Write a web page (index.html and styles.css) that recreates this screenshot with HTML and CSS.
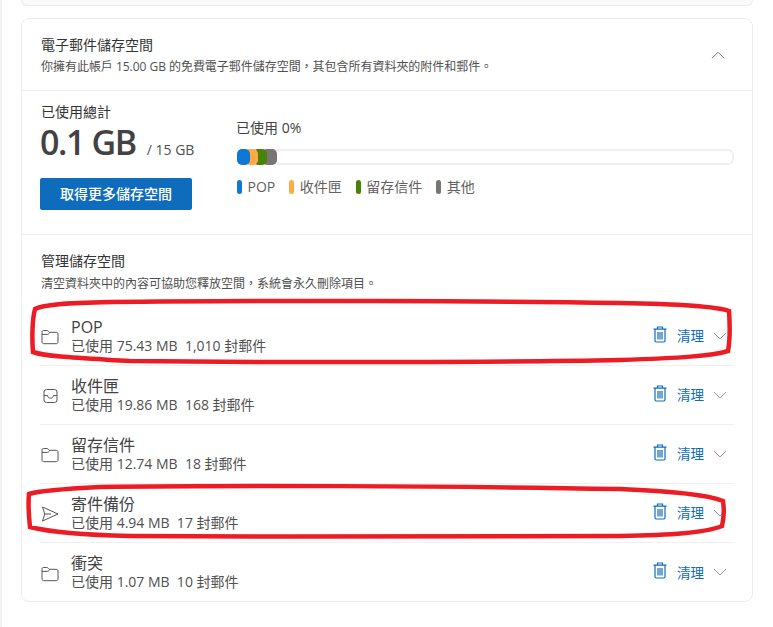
FILE: index.html
```html
<!DOCTYPE html>
<html lang="zh-Hant">
<head>
<meta charset="utf-8">
<title>電子郵件儲存空間</title>
<link rel="stylesheet" href="styles.css">
</head>
<body>
<main class="page">
  <div class="stub"></div>
  <section class="card">
    <header class="head">
      <div>
        <h2 class="head-title">電子郵件儲存空間</h2>
        <p class="head-sub">你擁有此帳戶 15.00 GB 的免費電子郵件儲存空間，其包含所有資料夾的附件和郵件。</p>
      </div>
      <svg class="head-chevron" width="14" height="8" viewBox="0 0 14 8"><path d="M1 7.2 7 1.2l6 6" fill="none" stroke="#777" stroke-width="1"/></svg>
    </header>
    <div class="usage">
      <div class="total">
        <div class="total-label">已使用總計</div>
        <div class="total-value"><span class="big">0.1 GB</span><span class="of">/ 15 GB</span></div>
        <button class="get-more">取得更多儲存空間</button>
      </div>
      <div class="meter">
        <div class="meter-label">已使用 0%</div>
        <div class="bar">
          <span class="seg seg-blue"></span><span class="seg seg-orange"></span><span class="seg seg-green"></span><span class="seg seg-gray"></span>
        </div>
        <ul class="legend">
          <li><i class="dot seg-blue"></i>POP</li>
          <li><i class="dot seg-orange"></i>收件匣</li>
          <li><i class="dot seg-green"></i>留存信件</li>
          <li><i class="dot seg-gray"></i>其他</li>
        </ul>
      </div>
    </div>
    <div class="manage">
      <h3 class="manage-title">管理儲存空間</h3>
      <p class="manage-sub">清空資料夾中的內容可協助您釋放空間，系統會永久刪除項目。</p>
      <ul class="rows">
        <li class="row">
          <svg class="row-icon" width="18" height="16" viewBox="0 0 18 16"><path d="M1 3.200C1 2 1.700 1.500 2.600 1.500h3.200c.7 0 1.100.3 1.600.8l1 1h6.900C16.300 3.300 17 4 17 5v8c0 1-.7 1.700-1.700 1.700H2.700C1.700 14.700 1 14 1 13zM1 5.400h5.300c.7 0 1.200-.3 1.600-.8l1.100-1.300" fill="none" stroke="#555" stroke-width="1"/></svg>
          <div class="row-text"><div class="row-name">POP</div><div class="row-meta">已使用 75.43 MB&nbsp;&nbsp;1,010 封郵件</div></div>
          <svg class="trash" width="14" height="17" viewBox="0 0 14 17"><path d="M4.500 3V1h5v2M.5 3.200h13M2 3.500v11.300c0 .7.500 1.200 1.200 1.200h7.600c.7 0 1.200-.5 1.200-1.200V3.500M5 6v7.500M7 6v7.500M9 6v7.500" fill="none" stroke="#0f6cbd" stroke-width="1.200"/></svg>
          <span class="clean">清理</span>
          <svg class="chev" width="14" height="8" viewBox="0 0 14 8"><path d="M1 1l6 6 6-6" fill="none" stroke="#999" stroke-width="1"/></svg>
        </li>
        <li class="row">
          <svg class="row-icon" width="18" height="16" viewBox="0 0 16 16"><rect x="2" y="1.500" width="13" height="13" rx="2.500" fill="none" stroke="#555" stroke-width="1"/><path d="M2 7.500h3.500c.5 2 1.500 2.700 3 2.700s2.500-.7 3-2.700H15" fill="none" stroke="#555" stroke-width="1"/></svg>
          <div class="row-text"><div class="row-name">收件匣</div><div class="row-meta">已使用 19.86 MB&nbsp;&nbsp;168 封郵件</div></div>
          <svg class="trash" width="14" height="17" viewBox="0 0 14 17"><path d="M4.500 3V1h5v2M.5 3.200h13M2 3.500v11.300c0 .7.500 1.200 1.200 1.200h7.600c.7 0 1.200-.5 1.200-1.200V3.500M5 6v7.500M7 6v7.500M9 6v7.500" fill="none" stroke="#0f6cbd" stroke-width="1.200"/></svg>
          <span class="clean">清理</span>
          <svg class="chev" width="14" height="8" viewBox="0 0 14 8"><path d="M1 1l6 6 6-6" fill="none" stroke="#999" stroke-width="1"/></svg>
        </li>
        <li class="row">
          <svg class="row-icon" width="18" height="16" viewBox="0 0 18 16"><path d="M1 3.200C1 2 1.700 1.500 2.600 1.500h3.200c.7 0 1.100.3 1.600.8l1 1h6.900C16.300 3.300 17 4 17 5v8c0 1-.7 1.700-1.700 1.700H2.700C1.700 14.700 1 14 1 13zM1 5.400h5.300c.7 0 1.200-.3 1.600-.8l1.100-1.300" fill="none" stroke="#555" stroke-width="1"/></svg>
          <div class="row-text"><div class="row-name">留存信件</div><div class="row-meta">已使用 12.74 MB&nbsp;&nbsp;18 封郵件</div></div>
          <svg class="trash" width="14" height="17" viewBox="0 0 14 17"><path d="M4.500 3V1h5v2M.5 3.200h13M2 3.500v11.300c0 .7.500 1.200 1.200 1.200h7.600c.7 0 1.200-.5 1.200-1.200V3.500M5 6v7.500M7 6v7.500M9 6v7.500" fill="none" stroke="#0f6cbd" stroke-width="1.200"/></svg>
          <span class="clean">清理</span>
          <svg class="chev" width="14" height="8" viewBox="0 0 14 8"><path d="M1 1l6 6 6-6" fill="none" stroke="#999" stroke-width="1"/></svg>
        </li>
        <li class="row">
          <svg class="row-icon" width="18" height="16" viewBox="0 0 18 16"><path d="M1.500 1 17 8 1.500 15 3.800 8zM3.800 8H10" fill="none" stroke="#555" stroke-width="1" stroke-linejoin="round"/></svg>
          <div class="row-text"><div class="row-name">寄件備份</div><div class="row-meta">已使用 4.94 MB&nbsp;&nbsp;17 封郵件</div></div>
          <svg class="trash" width="14" height="17" viewBox="0 0 14 17"><path d="M4.500 3V1h5v2M.5 3.200h13M2 3.500v11.300c0 .7.500 1.200 1.200 1.200h7.600c.7 0 1.200-.5 1.200-1.200V3.500M5 6v7.500M7 6v7.500M9 6v7.500" fill="none" stroke="#0f6cbd" stroke-width="1.200"/></svg>
          <span class="clean">清理</span>
          <svg class="chev" width="14" height="8" viewBox="0 0 14 8"><path d="M1 1l6 6 6-6" fill="none" stroke="#999" stroke-width="1"/></svg>
        </li>
        <li class="row">
          <svg class="row-icon" width="18" height="16" viewBox="0 0 18 16"><path d="M1 3.200C1 2 1.700 1.500 2.600 1.500h3.200c.7 0 1.100.3 1.600.8l1 1h6.900C16.300 3.300 17 4 17 5v8c0 1-.7 1.700-1.700 1.700H2.700C1.700 14.700 1 14 1 13zM1 5.400h5.300c.7 0 1.200-.3 1.600-.8l1.100-1.300" fill="none" stroke="#555" stroke-width="1"/></svg>
          <div class="row-text"><div class="row-name">衝突</div><div class="row-meta">已使用 1.07 MB&nbsp;&nbsp;10 封郵件</div></div>
          <svg class="trash" width="14" height="17" viewBox="0 0 14 17"><path d="M4.500 3V1h5v2M.5 3.200h13M2 3.500v11.300c0 .7.500 1.200 1.200 1.200h7.600c.7 0 1.200-.5 1.200-1.200V3.500M5 6v7.500M7 6v7.500M9 6v7.500" fill="none" stroke="#0f6cbd" stroke-width="1.200"/></svg>
          <span class="clean">清理</span>
          <svg class="chev" width="14" height="8" viewBox="0 0 14 8"><path d="M1 1l6 6 6-6" fill="none" stroke="#999" stroke-width="1"/></svg>
        </li>
      </ul>
    </div>
  </section>
</main>
<svg class="marks" width="773" height="627" viewBox="0 0 773 627">
  <path class="mark" d="M110 302 C60 303 42 305 35 309 C32 320 32 340 33 352 C48 357 80 358 130 361 C300 363 520 362 620 360 C680 358 712 356 728 351 C730 340 730 325 729 311 C715 306 680 304 620 303 C500 301 250 300 110 302Z"/>
  <path class="mark" d="M100 487 C60 489 38 491 29 494 C28 505 29 518 30 527 C50 532 85 535 130 536 C300 537 520 537 620 536 C670 535 705 533 722 526 C724 518 724 508 723 501 C708 495 670 491 620 489 C450 486 220 485 100 487Z"/>
</svg>
</body>
</html>
```

FILE: styles.css
```css
* { box-sizing: border-box; }
html, body { margin: 0; padding: 0; }
body {
  width: 773px;
  height: 627px;
  overflow: hidden;
  background: #fff;
  color: #424242;
  font-family: "Open Sans", "Noto Sans CJK TC", sans-serif;
  position: relative;
}
.page {
  height: 627px;
  border-left: 2px solid #f3f3f3;
  padding: 0 19px 0 19px;
}
.stub {
  width: 732px;
  height: 6px;
  background: #fafafa;
  border: 1px solid #ececec;
  border-top: 0;
  border-radius: 0 0 8px 8px;
  margin-bottom: 12px;
}
.card {
  width: 732px;
  height: 584px;
  border: 1px solid #ececec;
  border-radius: 8px;
  background: #fff;
}
.head {
  height: 72px;
  padding: 16px 27px 0 19px;
  border-bottom: 1px solid #f0f0f0;
  display: flex;
  justify-content: space-between;
  align-items: flex-start;
}
.head-title {
  margin: 0;
  font-size: 14px;
  line-height: 20px;
  font-weight: 400;
  color: #333;
}
.head-sub {
  margin: 4px 0 0;
  font-size: 12px;
  line-height: 16px;
  letter-spacing: -0.03px;
  color: #505050;
}
.head-chevron { margin-top: 16px; }
.usage {
  height: 144px;
  padding: 11px 18px 0;
  border-bottom: 1px solid #f0f0f0;
  display: flex;
  gap: 44px;
}
.total { width: 152px; flex: none; }
.total-label {
  margin-left: 1px;
  font-size: 14px;
  line-height: 20px;
  color: #333;
}
.total-value {
  display: flex;
  align-items: baseline;
  gap: 11px;
  height: 41px;
  white-space: nowrap;
}
.big {
  font-size: 34px;
  line-height: 41px;
  font-weight: 600;
  letter-spacing: -1.4px;
  color: #424242;
}
.of { font-size: 14px; color: #505050; }
.get-more {
  display: block;
  width: 152px;
  height: 32px;
  margin-top: 15px;
  border: 0;
  border-radius: 2px;
  background: #0f6cbd;
  color: #fff;
  font: 500 14px/32px "Open Sans", "Noto Sans CJK TC", sans-serif;
  padding: 0;
}
.meter { flex: 1; padding-top: 16px; }
.meter-label {
  font-size: 14px;
  line-height: 20px;
  color: #424242;
}
.bar {
  display: flex;
  height: 16px;
  margin-top: 11px;
  margin-left: 1px;
  border: 2px solid #f0f0f0;
  border-radius: 6px;
  overflow: visible;
  align-items: center;
}
.seg {
  display: block;
  height: 16px;
  border-radius: 5px;
  flex: none;
  position: relative;
}
.bar .seg-blue { width: 13px; margin-left: -2px; z-index: 4; }
.bar .seg-orange { width: 13px; margin-left: -5px; z-index: 3; }
.bar .seg-green { width: 14px; margin-left: -5px; z-index: 2; }
.bar .seg-gray { width: 15px; margin-left: -5px; z-index: 1; }
.seg-blue { background: #0f78d4; }
.seg-orange { background: #ffaa44; }
.seg-green { background: #498205; }
.seg-gray { background: #7a7574; }
.legend {
  list-style: none;
  margin: 13px 0 0 1px;
  padding: 0;
  display: flex;
  gap: 14px;
  font-size: 14px;
  line-height: 18px;
  color: #616161;
}
.legend li { display: flex; align-items: center; gap: 5.500px; }
.dot {
  display: block;
  width: 5px;
  height: 14px;
  border-radius: 3px;
}
.manage { padding: 16px 18px 0; }
.manage-title {
  margin: 0 0 0 1px;
  font-size: 14px;
  line-height: 20px;
  font-weight: 400;
  color: #333;
}
.manage-sub {
  margin: 5px 0 0 1px;
  font-size: 12px;
  line-height: 16px;
  color: #505050;
}
.rows { list-style: none; margin: 15px 0 0; padding: 0; }
.row {
  height: 59px;
  display: flex;
  align-items: center;
  border-bottom: 1px solid #f0f0f0;
}
.row:last-child { border-bottom: 0; }
.row-icon { flex: none; margin: 2px 12px 0 1px; }
.row-text { flex: 1; }
.row-name {
  font-size: 16px;
  line-height: 19px;
  color: #424242;
}
.row-meta {
  font-size: 14px;
  line-height: 18px;
  color: #505050;
}
.trash { flex: none; margin-right: 10px; margin-top: -4px; }
.clean {
  font-size: 13.500px;
  line-height: 18px;
  color: #0f6cbd;
  margin-right: 9px;
}
.chev { flex: none; margin-right: 7px; margin-top: -1px; }
.marks {
  position: absolute;
  left: 0;
  top: 0;
  pointer-events: none;
}
.mark {
  fill: none;
  stroke: #ed1c24;
  stroke-width: 4.500;
}
```
